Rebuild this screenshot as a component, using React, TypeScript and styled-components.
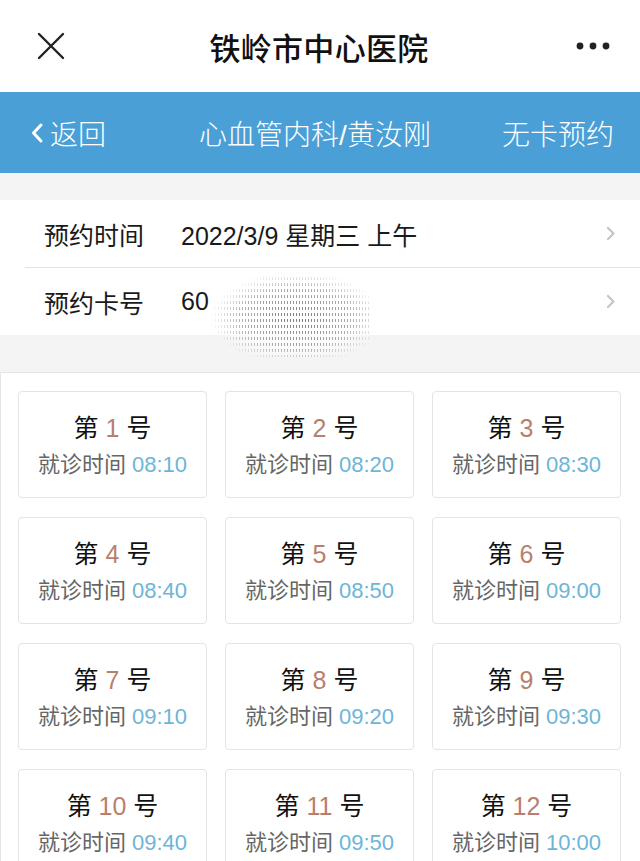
import React from 'react';
import styled, { createGlobalStyle } from 'styled-components';

const GlobalStyle = createGlobalStyle`
  html, body {
    margin: 0;
    padding: 0;
    background: #f4f4f4;
    font-family: 'Liberation Sans', 'Noto Sans CJK SC', sans-serif;
    color: #1a1a1a;
  }
  * {
    box-sizing: border-box;
  }
`;

const slots = [
  { no: 1, time: '08:10' },
  { no: 2, time: '08:20' },
  { no: 3, time: '08:30' },
  { no: 4, time: '08:40' },
  { no: 5, time: '08:50' },
  { no: 6, time: '09:00' },
  { no: 7, time: '09:10' },
  { no: 8, time: '09:20' },
  { no: 9, time: '09:30' },
  { no: 10, time: '09:40' },
  { no: 11, time: '09:50' },
  { no: 12, time: '10:00' },
];

const Page = styled.div`
  width: 640px;
  overflow: hidden;
`;

const TopBar = styled.div`
  height: 92px;
  background: #ffffff;
  display: flex;
  align-items: center;
  justify-content: space-between;
  padding: 0 30px 0 34px;
`;

const IconButton = styled.div`
  width: 34px;
  height: 34px;
  display: flex;
  align-items: center;
  justify-content: center;
`;

const Title = styled.div`
  font-size: 31px;
  font-weight: 500;
  color: #111;
  letter-spacing: 0.3px;
  margin-right: 6px;
`;

const BlueBar = styled.div`
  height: 81px;
  background: #4b9fd7;
  display: flex;
  align-items: center;
  justify-content: space-between;
  padding: 0 26px 0 30px;
  color: #ffffff;
  font-size: 28px;
  font-weight: 300;
`;

const Back = styled.div`
  display: flex;
  align-items: center;
  gap: 6px;
`;

const BarTitle = styled.div`
  margin-left: 22px;
`;

const Spacer = styled.div<{ h: number }>`
  height: ${(p) => p.h}px;
  background: #f4f4f4;
`;

const InfoSection = styled.div`
  background: #ffffff;
`;

const InfoRow = styled.div<{ last?: boolean }>`
  height: ${(p) => (p.last ? 67 : 68)}px;
  margin-left: 25px;
  padding: 0 24px 0 19px;
  display: flex;
  align-items: center;
  border-bottom: ${(p) => (p.last ? 'none' : '1px solid #e3e3e3')};
  font-size: 25px;
  position: relative;
`;

const Label = styled.div`
  width: 137px;
  color: #1a1a1a;
`;

const Value = styled.div`
  flex: 1;
  color: #1a1a1a;
  position: relative;
`;

const Blur = styled.span`
  position: absolute;
  left: 28px;
  top: -16px;
  width: 160px;
  height: 86px;
  z-index: 2;
  background:
    repeating-linear-gradient(180deg, rgba(255,255,255,0) 0 3px, #ffffff 3px 6px),
    repeating-linear-gradient(90deg, #7a7a7a 0 1px, #ffffff 1px 3px);
  -webkit-mask-image: radial-gradient(ellipse at 55% 55%, #000 0%, rgba(0,0,0,0.6) 45%, transparent 70%);
  mask-image: radial-gradient(ellipse at 55% 55%, #000 0%, rgba(0,0,0,0.6) 45%, transparent 70%);
`;

const GridSection = styled.div`
  background: #ffffff;
  border-top: 1px solid #e6e6e6;
  border-left: 1px solid #e6e6e6;
  padding: 18px 19px 30px 17px;
  display: grid;
  grid-template-columns: repeat(3, 1fr);
  column-gap: 18px;
  row-gap: 19px;
`;

const Card = styled.div`
  height: 107px;
  border: 1px solid #e4e4e4;
  border-radius: 4px;
  background: #ffffff;
  display: flex;
  flex-direction: column;
  align-items: center;
  justify-content: center;
  padding-top: 2px;
`;

const CardTitle = styled.div`
  font-size: 25px;
  line-height: 38px;
  color: #111;
  white-space: pre;
`;

const Num = styled.span`
  color: #b97f6c;
`;

const CardTime = styled.div`
  font-size: 22px;
  line-height: 36px;
  color: #666;
  white-space: pre;
`;

const Time = styled.span`
  color: #6db5d8;
`;

const Chevron = ({ color }: { color: string }) => (
  <svg width="10" height="15" viewBox="0 0 10 15">
    <path d="M2 2 L7.5 7.5 L2 13" fill="none" stroke={color} strokeWidth="2.2" strokeLinecap="round" strokeLinejoin="round" />
  </svg>
);

export default function App() {
  return (
    <Page>
      <GlobalStyle />
      <TopBar>
        <IconButton>
          <svg width="28" height="28" viewBox="0 0 28 28">
            <path d="M2 2 L26 26 M26 2 L2 26" stroke="#222" strokeWidth="2.4" strokeLinecap="round" />
          </svg>
        </IconButton>
        <Title>铁岭市中心医院</Title>
        <IconButton>
          <svg width="34" height="10" viewBox="0 0 34 10">
            <circle cx="4" cy="5" r="3.4" fill="#222" />
            <circle cx="17" cy="5" r="3.4" fill="#222" />
            <circle cx="30" cy="5" r="3.4" fill="#222" />
          </svg>
        </IconButton>
      </TopBar>
      <BlueBar>
        <Back>
          <svg width="14" height="22" viewBox="0 0 14 22">
            <path d="M11 3 L3.5 11 L11 19" fill="none" stroke="#fff" strokeWidth="3" strokeLinecap="round" strokeLinejoin="round" />
          </svg>
          <span>返回</span>
        </Back>
        <BarTitle>心血管内科/黄汝刚</BarTitle>
        <div>无卡预约</div>
      </BlueBar>
      <Spacer h={27} />
      <InfoSection>
        <InfoRow>
          <Label>预约时间</Label>
          <Value>2022/3/9 星期三 上午</Value>
          <Chevron color="#c4c4c4" />
        </InfoRow>
        <InfoRow last>
          <Label>预约卡号</Label>
          <Value>
            60
            <Blur />
          </Value>
          <Chevron color="#c4c4c4" />
        </InfoRow>
      </InfoSection>
      <Spacer h={37} />
      <GridSection>
        {slots.map((s) => (
          <Card key={s.no}>
            <CardTitle>
              第 <Num>{s.no}</Num> 号
            </CardTitle>
            <CardTime>
              就诊时间 <Time>{s.time}</Time>
            </CardTime>
          </Card>
        ))}
      </GridSection>
    </Page>
  );
}
